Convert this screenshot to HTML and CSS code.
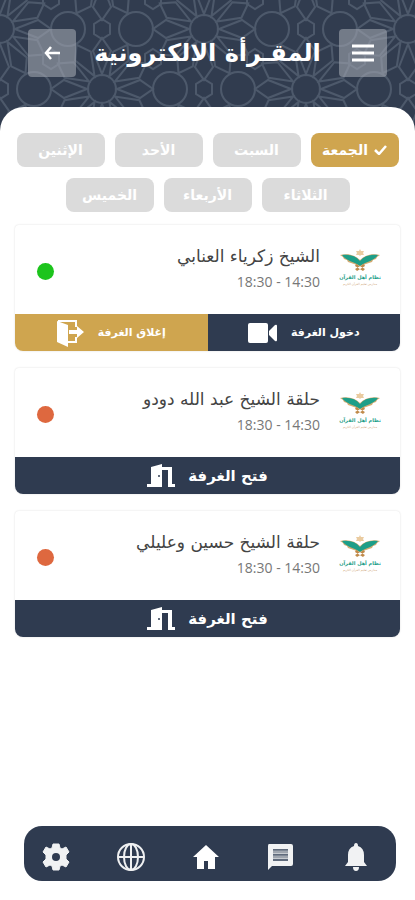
FILE: index.html
```html
<!DOCTYPE html>
<html lang="ar" dir="rtl">
<head>
<meta charset="utf-8">
<meta name="viewport" content="width=device-width, initial-scale=1">
<title>المقرأة الالكترونية</title>
<link rel="stylesheet" href="styles.css">
</head>
<body>
<svg class="defs" aria-hidden="true">
  <defs>
    <path id="petal" d="M15 0 38 9 51 0 38-9Z"/>
    <g id="quarter"><use href="#petal"/><use href="#petal" transform="rotate(30)"/><use href="#petal" transform="rotate(60)"/></g>
    <g id="rosette">
      <use href="#quarter"/><use href="#quarter" transform="rotate(90)"/><use href="#quarter" transform="rotate(180)"/><use href="#quarter" transform="rotate(270)"/>
      <circle r="14"/>
    </g>
    <path id="hex" d="M0-10 8-5V5L0 10-8 5V-5Z"/>
    <pattern id="girih" width="204" height="120" patternUnits="userSpaceOnUse" x="0" y="29">
      <g fill="none" stroke="#4d596b" stroke-width="2">
        <use href="#rosette"/><use href="#rosette" x="204"/><use href="#rosette" y="120"/><use href="#rosette" x="204" y="120"/><use href="#rosette" x="102" y="60"/>
        <circle cx="68" cy="0" r="17"/><circle cx="136" cy="0" r="17"/><circle cx="68" cy="120" r="17"/><circle cx="136" cy="120" r="17"/>
        <circle cx="34" cy="60" r="17"/><circle cx="170" cy="60" r="17"/>
        <use href="#hex" x="102"/><use href="#hex" x="102" y="120"/><use href="#hex" y="60"/><use href="#hex" x="204" y="60"/>
        <use href="#hex" x="51" y="30"/><use href="#hex" x="153" y="30"/><use href="#hex" x="51" y="90"/><use href="#hex" x="153" y="90"/>
      </g>
    </pattern>
    <symbol id="logo" viewBox="0 0 42 38">
      <path d="m21 0 1 2 3 0-1 2 1 2-3 0-1 1-1-1-3 0 1-2-1-2 3 0Z" fill="#eacba0"/>
      <path d="M1 6C9 4 16 6 21 11 26 6 33 4 41 6L38 8 37 10 34 11 33 13 30 14 21 17 12 14 9 13 8 11 5 10 4 8Z" fill="#d3ab72"/>
      <path d="M3 6C11 5 17 7 21 12 25 7 31 5 39 6 35 12 28 12 21 17 14 12 7 12 3 6Z" fill="#1d9e88"/>
      <path d="m17 15 9 5-2 2-8-5ZM25 15l-9 5 2 2 8-5Z" fill="#c08a4a"/>
      <text x="21" y="30" text-anchor="middle" direction="rtl" class="logo-name">نظام أهل القرآن</text>
      <text x="21" y="36" text-anchor="middle" direction="rtl" class="logo-sub">مدارس تعليم القرآن الكريم</text>
    </symbol>
    <symbol id="door" viewBox="0 0 30 24">
      <path d="M0 20h4V3L15 0v3h10v17h3v3h-7V6h-6v17H0Z" fill="#fff"/><circle cx="12" cy="12" r="1" fill="#2f3b50"/>
    </symbol>
  </defs>
</svg>

<header class="header">
  <svg class="header-pattern" aria-hidden="true"><rect width="100%" height="100%" fill="url(#girih)"/></svg>
  <button class="square" type="button" aria-label="القائمة">
    <svg width="22" height="20" viewBox="0 0 22 20"><path d="M0 3h22M0 10h22M0 17h22" stroke="#fff" stroke-width="3"/></svg>
  </button>
  <h1 class="title">المقـرأة الالكترونية</h1>
  <button class="square" type="button" aria-label="رجوع">
    <svg width="16" height="14" viewBox="0 0 16 14"><path d="M16 7H2M7 1 2 7l5 6" fill="none" stroke="#fff" stroke-width="2.5"/></svg>
  </button>
</header>

<main class="sheet">
  <div class="days">
    <button class="day day-active" type="button"><svg width="13" height="10" viewBox="0 0 13 10"><path d="m1 5 4 4 7-8" fill="none" stroke="#fff" stroke-width="2.5"/></svg>الجمعة</button>
    <button class="day" type="button">السبت</button>
    <button class="day" type="button">الأحد</button>
    <button class="day" type="button">الإثنين</button>
    <button class="day" type="button">الثلاثاء</button>
    <button class="day" type="button">الأربعاء</button>
    <button class="day" type="button">الخميس</button>
  </div>

  <article class="card">
    <div class="info">
      <svg class="logo"><use href="#logo"/></svg>
      <div class="text"><h2 class="name">الشيخ زكرياء العنابي</h2><p class="time" dir="ltr">18:30 - 14:30</p></div>
      <span class="dot dot-on"></span>
    </div>
    <div class="actions">
      <button class="action action-half" type="button">دخول الغرفة
        <svg width="29" height="20" viewBox="0 0 29 20"><rect width="20" height="20" rx="2" fill="#fff"/><path d="M21 8 27 2q2-1 2 1v14q0 2-2 1l-6-6Z" fill="#fff"/></svg>
      </button>
      <button class="action action-half action-gold" type="button">إغلاق الغرفة
        <svg width="27" height="28" viewBox="0 0 27 28"><path d="M0 2 11 6V28L0 23Z" fill="#fff"/><path d="M1 2H19V8M19 18v5H11" fill="none" stroke="#fff" stroke-width="2"/><path d="M12 11h8V7l7 6-7 6v-4h-8Z" fill="#fff"/></svg>
      </button>
    </div>
  </article>

  <article class="card">
    <div class="info">
      <svg class="logo"><use href="#logo"/></svg>
      <div class="text"><h2 class="name">حلقة الشيخ عبد الله دودو</h2><p class="time" dir="ltr">18:30 - 14:30</p></div>
      <span class="dot"></span>
    </div>
    <div class="actions">
      <button class="action" type="button">فتح الغرفة<svg width="30" height="24"><use href="#door"/></svg></button>
    </div>
  </article>

  <article class="card">
    <div class="info">
      <svg class="logo"><use href="#logo"/></svg>
      <div class="text"><h2 class="name">حلقة الشيخ حسين وعليلي</h2><p class="time" dir="ltr">18:30 - 14:30</p></div>
      <span class="dot"></span>
    </div>
    <div class="actions">
      <button class="action" type="button">فتح الغرفة<svg width="30" height="24"><use href="#door"/></svg></button>
    </div>
  </article>

  <nav class="nav">
    <a class="nav-link" href="#notifications" aria-label="الإشعارات"><svg width="28" height="30" viewBox="0 0 28 30"><path d="M14 1q2 0 2 3 6 2 6 9v7l3 4H3l3-4v-7q0-7 6-9 0-3 2-3ZM11 25h6q0 4-3 4t-3-4Z" fill="#f1f2f3"/></svg></a>
    <a class="nav-link" href="#messages" aria-label="الرسائل"><svg width="28" height="28" viewBox="0 0 28 28"><path d="M2 1h22q2 0 2 2v18q0 2-2 2H5l-4 4V3q0-2 1-2Z" fill="#f1f2f3"/><path d="M6 7h15M6 12h15M6 17h15" stroke="#5f6a7b" stroke-width="2"/><path d="M6 9h15M6 14h15" stroke="#a0a6af" stroke-width="3"/></svg></a>
    <a class="nav-link" href="#home" aria-label="الرئيسية"><svg width="28" height="26" viewBox="0 0 28 26"><path d="m14 1 13 12h-4v12h-7v-8h-4v8H5V13H1Z" fill="#fff"/></svg></a>
    <a class="nav-link" href="#language" aria-label="اللغة"><svg width="28" height="28" viewBox="0 0 28 28"><g fill="none" stroke="#eff0f1" stroke-width="2"><circle cx="14" cy="14" r="13"/><ellipse cx="14" cy="14" rx="7" ry="13"/><path d="M14 1v26M1 14h26"/></g></svg></a>
    <a class="nav-link" href="#settings" aria-label="الإعدادات"><svg width="28" height="28" viewBox="0 0 28 28"><path d="m11 1h6l1 4 2 1 4-2 3 5-3 3v4l3 3-3 5-4-2-2 1-1 4h-6l-1-4-2-1-4 2-3-5 3-3v-4L1 9l3-5 4 2 2-1Z" fill="#f1f2f3" stroke="#f1f2f3" stroke-linejoin="round"/><circle cx="14" cy="14" r="4" fill="#2f3b50"/></svg></a>
  </nav>
</main>
</body>
</html>
```
FILE: styles.css
```css
* {
  box-sizing: border-box;
}

body {
  margin: 0;
  min-height: 100vh;
  display: flex;
  flex-direction: column;
  background: #313c4f;
  font-family: "DejaVu Sans", sans-serif;
}

button {
  border: 0;
  padding: 0;
  font-family: inherit;
  color: #fff;
  cursor: pointer;
}

svg {
  flex: none;
}

.defs {
  position: absolute;
  width: 0;
  height: 0;
}

.header {
  position: relative;
  display: flex;
  align-items: center;
  justify-content: space-between;
  padding: 29px 28px 54px;
}

.header-pattern {
  position: absolute;
  inset: 0;
  width: 100%;
  height: 100%;
}

.square {
  position: relative;
  display: grid;
  place-items: center;
  width: 48px;
  height: 48px;
  border-radius: 4px;
  background: rgba(160, 165, 175, 0.6);
}

.title {
  position: relative;
  margin: 0;
  color: #fff;
  font-size: 24px;
  line-height: 40px;
  white-space: nowrap;
}

.sheet {
  position: relative;
  flex: 1;
  display: flex;
  flex-direction: column;
  gap: 17px;
  margin-top: -24px;
  padding: 26px 15px 19px;
  border-radius: 24px 24px 0 0;
  background: #fff;
}

.days {
  display: flex;
  flex-wrap: wrap;
  justify-content: center;
  gap: 11px 10px;
  margin-bottom: -4px;
}

.day {
  display: flex;
  align-items: center;
  justify-content: center;
  gap: 6px;
  width: 88px;
  height: 34px;
  border-radius: 8px;
  background: #dbdbdb;
  font-size: 14px;
  font-weight: bold;
}

.day-active {
  background: #cfa54f;
}

.card {
  overflow: hidden;
  border-radius: 4px 4px 8px 8px;
  background: #fff;
  box-shadow: 0 0 2px rgba(0, 0, 0, 0.15);
}

.info {
  display: flex;
  align-items: center;
  height: 89px;
  padding: 0 19px 4px 22px;
}

.logo {
  width: 42px;
  height: 38px;
}

.logo-name {
  fill: #1d9e88;
  font-size: 5px;
  font-weight: bold;
}

.logo-sub {
  fill: #d0a878;
  font-size: 3px;
}

.text {
  flex: 1;
  padding: 0 19px;
}

.name {
  margin: 0;
  color: #444;
  font-size: 17px;
  font-weight: normal;
  line-height: 28px;
}

.time {
  margin: 0;
  color: #777;
  font-family: "Open Sans", sans-serif;
  font-size: 14px;
  line-height: 24px;
  text-align: right;
}

.dot {
  width: 17px;
  height: 17px;
  margin-top: 8px;
  border-radius: 50%;
  background: #de683f;
}

.dot-on {
  background: #1cc41c;
}

.actions {
  display: flex;
  height: 37px;
}

.action {
  flex: 1;
  display: flex;
  align-items: center;
  justify-content: center;
  gap: 11px;
  background: #2f3b50;
  font-size: 15px;
  font-weight: bold;
}

.action-half {
  gap: 14px;
  font-size: 11px;
}

.action-gold {
  background: #cfa54f;
}

.nav {
  display: flex;
  align-items: center;
  justify-content: space-between;
  height: 55px;
  margin: auto 4px 0 9px;
  padding: 6px 26px 0 18px;
  border-radius: 18px;
  background: #2f3b50;
}

.nav-link {
  display: flex;
}
```
